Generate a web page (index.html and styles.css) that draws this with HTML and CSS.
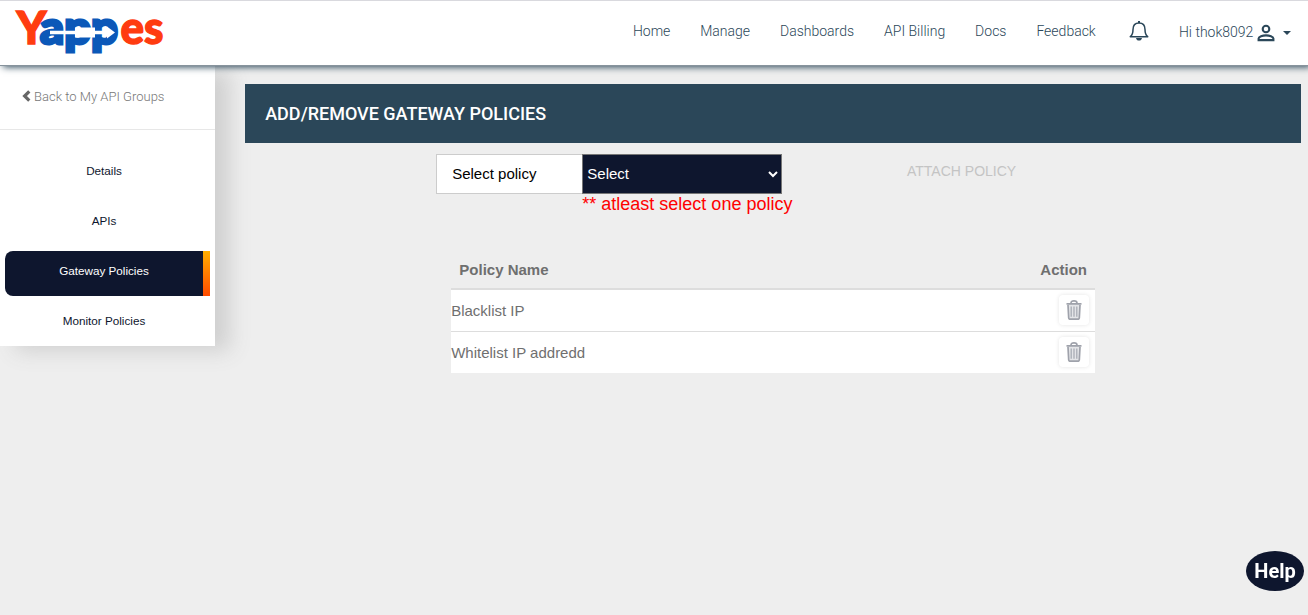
FILE: index.html
```html
<!DOCTYPE html>
<html lang="en">
<head>
<meta charset="utf-8">
<title>Yappes - Gateway Policies</title>
<link rel="stylesheet" href="styles.css">
</head>
<body>
<header class="topbar">
  <svg class="logo" width="156" height="64" viewBox="14 1 156 64" role="img" aria-label="Yappes">
    <g class="logo-text">
      <text class="logo-red" x="16.500" y="44" font-size="46" textLength="30" lengthAdjust="spacingAndGlyphs">Y</text>
      <text class="logo-blue" x="40" y="43.500" font-size="46" textLength="78" lengthAdjust="spacingAndGlyphs">app</text>
      <text class="logo-red" x="120.500" y="44" font-size="46" textLength="43" lengthAdjust="spacingAndGlyphs">es</text>
    </g>
    <path class="logo-arrow" d="M50 30.700h25v-3.200h20v3.200h12v-4.200l8 6-8 6v-4.200H95v3.200H75v-3.200H50z"/>
  </svg>
  <nav class="nav">
    <a>Home</a><a>Manage</a><a>Dashboards</a><a>API Billing</a><a>Docs</a><a>Feedback</a>
  </nav>
  <svg class="bell" width="20" height="22" viewBox="0 0 20 22">
    <path d="M1.300 16.700c2.500-2 2.700-4 2.700-7.200C4 5.600 6.300 3 10 3s6 2.600 6 6.500c0 3.200.2 5.200 2.700 7.200z" fill="none" stroke="currentColor" stroke-width="1.500" stroke-linejoin="round"/>
    <path d="M9 1h2v2H9zM7 18h6c-.3 1.700-1.400 2.600-3 2.600S7.300 19.700 7 18z" fill="currentColor"/>
  </svg>
  <div class="user">
    <span class="user-name">Hi thok8092</span>
    <svg class="person" width="18" height="18" viewBox="0 0 18 18" fill="none" stroke="currentColor" stroke-width="2.100">
      <circle cx="9" cy="5" r="3.300"/><path d="M1.600 16.100v-1.600c0-2 4-3.100 7.400-3.100s7.400 1.100 7.400 3.100v1.600z"/>
    </svg>
    <span class="caret"></span>
  </div>
</header>
<div class="layout">
  <aside class="sidebar">
    <a class="back"><svg width="9" height="12" viewBox="0 0 9 12"><path d="M7.300 1.300 2.600 6l4.700 4.700" fill="none" stroke="currentColor" stroke-width="3.200"/></svg><span>Back to My API Groups</span></a>
    <div class="menu">
      <a class="item">Details</a>
      <a class="item">APIs</a>
      <a class="item active">Gateway Policies</a>
      <a class="item">Monitor Policies</a>
    </div>
  </aside>
  <main class="content">
    <h1 class="title">ADD/REMOVE GATEWAY POLICIES</h1>
    <div class="form">
      <label class="label" for="policy">Select policy</label>
      <div class="field">
        <select class="select" id="policy"><option>Select</option></select>
        <span class="error">** atleast select one policy</span>
      </div>
      <span class="attach">ATTACH POLICY</span>
    </div>
    <div class="table">
      <div class="row head"><span>Policy Name</span><span>Action</span></div>
      <div class="row"><span>Blacklist IP</span>
        <button class="trash" aria-label="Delete"><svg width="16" height="20" viewBox="0 0 16 20"><use href="#bin"/></svg></button></div>
      <div class="row"><span>Whitelist IP addredd</span>
        <button class="trash" aria-label="Delete"><svg width="16" height="20" viewBox="0 0 16 20"><use href="#bin"/></svg></button></div>
    </div>
  </main>
</div>
<a class="help">Help</a>
<svg width="0" height="0" class="defs">
  <symbol id="bin" viewBox="0 0 16 20">
    <path d="M2 4h12l-.7 15H2.700z" fill="#e4e5e8"/>
    <path d="M5 3.200C5 1.400 6 .9 8 .9s3 .5 3 2.300M.5 3.900h15M2 5l.7 13c.1.900.4 1.200 1.200 1.200h8.200c.8 0 1.100-.3 1.200-1.200L14 5" fill="none" stroke="#9fa2ab" stroke-width="1.700"/>
    <path d="M5.200 6.500v10.300M8 6.500v10.300M10.800 6.500v10.300" stroke="#a9adb5" stroke-width="1.300"/>
  </symbol>
</svg>
</body>
</html>
```
FILE: styles.css
```css
* { box-sizing: border-box; }
body {
  margin: 0;
  height: 615px;
  overflow: hidden;
  background: #eee;
  font-family: "Liberation Sans", Arial, sans-serif;
}
.topbar {
  position: relative;
  z-index: 2;
  display: flex;
  height: 66px;
  padding-left: 14px;
  border-top: 1px solid #d9d9de;
  border-bottom: 1px solid #87939c;
  background: #fff;
  box-shadow: 3px 1px 7px #2b4759;
  color: #2b4759;
  font: 300 14px/20px Roboto, sans-serif;
}
.logo { flex: none; }
.logo-text { font-family: Lato, sans-serif; font-weight: 900; }
.logo-red { fill: #ff3c10; stroke: #ff3c10; stroke-width: 1.400; }
.logo-blue { fill: #0b58b8; stroke: #0b58b8; stroke-width: 3; }
.logo-arrow { fill: #fff; }
.nav { display: flex; gap: 29.950px; margin: 20px 0 0 462.900px; white-space: nowrap; }
.bell { flex: none; margin: 19px 0 0 33.700px; }
.user { display: flex; margin: 21px 0 0 29.500px; white-space: nowrap; }
.person { margin: 2px 0 0 3.500px; }
.caret {
  margin: 9px 0 0 8px;
  height: 4px;
  border: 4px solid transparent;
  border-top-color: #2b4759;
  border-bottom: 0;
}
.layout { display: flex; align-items: flex-start; }
.sidebar {
  width: 215px;
  height: 280px;
  background: #fff;
  box-shadow: 15px 5px 20px 0 #d0d0d0;
}
.back {
  display: flex;
  gap: 3px;
  height: 64px;
  padding: 21px 0 0 22px;
  border-bottom: 1px solid #e7e7e7;
  color: #777;
  font: 300 13px/20px Roboto, sans-serif;
}
.back svg { margin-top: 3px; color: #666; }
.menu { padding: 21px 5px 0; }
.item {
  display: block;
  height: 45px;
  margin-bottom: 5px;
  padding-right: 7px;
  color: #0e162e;
  font-size: 11.700px;
  line-height: 40px;
  text-align: center;
}
.active {
  border-radius: 8px 0 0 8px;
  background: linear-gradient(#ffae00, #ff4b00) right / 7px 100% no-repeat #0e162e;
  color: #fff;
}
.content { width: 1056px; margin: 18px 0 0 30px; }
.title {
  height: 59px;
  margin: 0;
  padding-left: 20.200px;
  background: #2b4759;
  color: #fff;
  font: 500 18px/59px Roboto, sans-serif;
}
.form { display: flex; height: 96px; padding: 11px 0 0 191px; }
.label {
  width: 146px;
  height: 40px;
  padding-left: 15.200px;
  border: 1px solid #ccc;
  border-right: 0;
  background: #fff;
  color: #000;
  font-size: 15px;
  line-height: 38px;
}
.field { width: 200px; white-space: nowrap; }
.select {
  display: block;
  width: 200px;
  height: 40px;
  padding: 0 0 1px .3px;
  border: 1px solid #767676;
  border-radius: 0;
  background: #0e162e;
  color: #fff;
  font: 15px "Liberation Sans", Arial, sans-serif;
}
.error { padding-left: .3px; color: #f00; font-size: 18px; line-height: 20px; }
.attach { margin: 7px 0 0 125px; color: #c4c4c4; font-size: 14px; line-height: 20px; }
.table { width: 644px; margin: 11px 0 0 206px; color: #6f6f6f; font-size: 15px; }
.row {
  display: flex;
  align-items: center;
  justify-content: space-between;
  height: 42px;
  padding: 0 6px 0 .2px;
  border-top: 1px solid #ddd;
  background: #fff;
  line-height: 18px;
}
.head {
  height: 39px;
  padding: 2px 8px 0 8.300px;
  border: 0;
  border-bottom: 1px solid #ddd;
  background: none;
  font-weight: bold;
}
.trash {
  display: grid;
  place-items: center;
  width: 30px;
  height: 30px;
  margin-bottom: 1px;
  padding: 0;
  border: 0;
  border-radius: 4px;
  background: #fff;
  box-shadow: 0 0 4px #e4e4e4;
}
.help {
  position: fixed;
  right: 4px;
  bottom: 24px;
  width: 58px;
  height: 40px;
  border-radius: 50%;
  background: #0e162e;
  color: #fff;
  font: 700 20px/40px Roboto, sans-serif;
  text-align: center;
}
.defs { position: absolute; }
```
